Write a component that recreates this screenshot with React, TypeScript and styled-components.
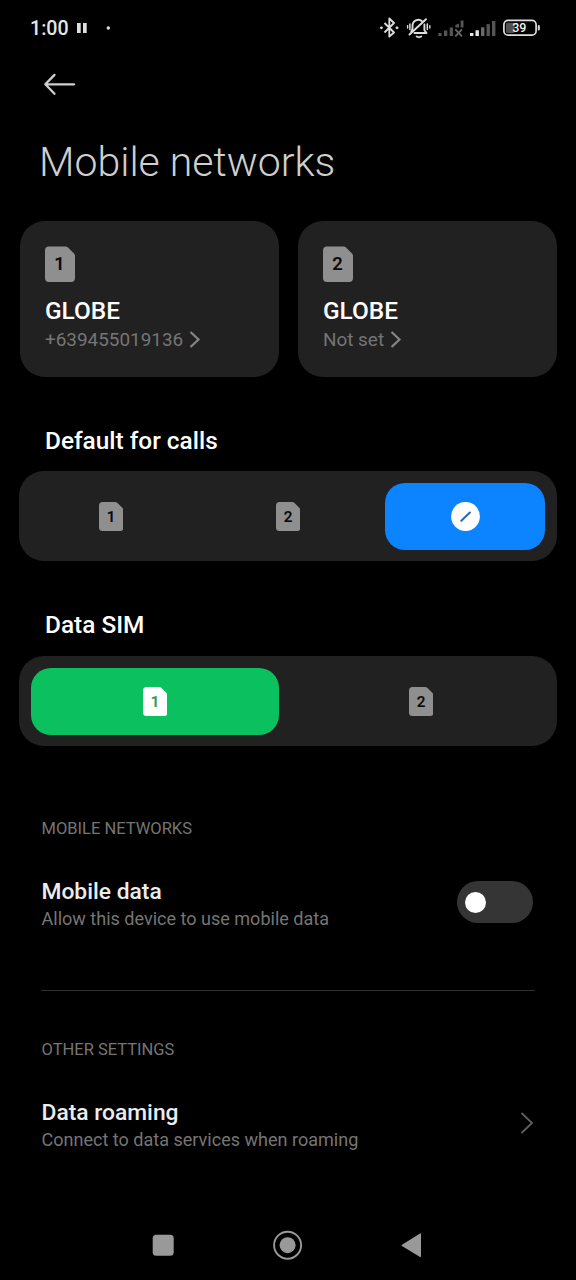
import React from 'react';
import styled, { createGlobalStyle } from 'styled-components';

const GlobalStyle = createGlobalStyle`
  *, *::before, *::after { box-sizing: border-box; }
  html, body { margin: 0; padding: 0; background: #000; }
  body { font-family: Roboto, "Noto Sans", sans-serif; color: #fff; }
  button { font: inherit; color: inherit; border: 0; padding: 0; background: none; }
  svg { display: block; flex: none; }
`;

const Screen = styled.div`
  display: flex;
  flex-direction: column;
  width: 576px;
  height: 1280px;
  overflow: hidden;
  background: #000;
`;

const StatusBar = styled.header`
  display: flex;
  align-items: center;
  justify-content: space-between;
  height: 56px;
  padding: 0 35px 0 30px;
`;

const StatusLeft = styled.div`
  display: flex;
  align-items: center;
`;

const Clock = styled.span`
  width: 47px;
  padding-top: 2px;
  font-size: 19.6px;
  font-weight: 500;
  line-height: 24px;
  color: #e6e6e6;
`;

const AppBar = styled.div`
  display: flex;
  align-items: center;
  height: 56px;
  padding-left: 43px;
`;

const Title = styled.h1`
  margin: 25px 0 34px 39px;
  font-size: 41px;
  font-weight: 300;
  line-height: 50px;
  color: #cfcfcf;
  white-space: nowrap;
`;

const Cards = styled.div`
  display: grid;
  grid-template-columns: 1fr 1fr;
  gap: 19px;
  padding: 0 19.5px;
`;

const Card = styled.button`
  display: flex;
  flex-direction: column;
  align-items: flex-start;
  height: 156px;
  padding: 25px 25.5px 0;
  border-radius: 25px;
  background: #212121;
`;

const Carrier = styled.span`
  margin-top: 15px;
  font-size: 24.4px;
  font-weight: 500;
  line-height: 28px;
`;

const CardDetail = styled.span`
  display: flex;
  align-items: center;
  gap: 6.2px;
  margin-top: 1px;
  font-size: 18.9px;
  line-height: 28px;
  color: #757575;
`;

const Heading = styled.h2<{ $top: number }>`
  margin: ${(p) => p.$top}px 0 0 45px;
  font-size: 24.4px;
  font-weight: 500;
  line-height: 30px;
`;

const Segments = styled.div<{ $gap: number; $top: number }>`
  display: flex;
  gap: ${(p) => p.$gap}px;
  height: 90px;
  margin: ${(p) => p.$top}px 19px 0;
  padding: 12px 12px 11px;
  border-radius: 25px;
  background: #212121;
`;

const Segment = styled.button<{ $fill?: string }>`
  display: flex;
  flex: 1;
  align-items: center;
  justify-content: center;
  border-radius: 20px;
  background: ${(p) => p.$fill ?? 'transparent'};
`;

const Caption = styled.h3<{ $top: number }>`
  margin: ${(p) => p.$top}px 0 0 41.5px;
  font-size: 16.5px;
  font-weight: 400;
  line-height: 20px;
  color: #757575;
`;

const Row = styled.div`
  display: flex;
  align-items: center;
  justify-content: space-between;
  height: 48px;
  margin-top: 39px;
  padding: 0 42px 0 41.5px;
`;

const RowText = styled.div`
  display: flex;
  flex-direction: column;
  align-self: flex-start;
`;

const RowTitle = styled.span`
  font-size: 22.8px;
  font-weight: 500;
  line-height: 27px;
  color: #ececec;
`;

const RowDetail = styled.span`
  font-size: 18.05px;
  line-height: 27px;
  color: #757575;
`;

const Toggle = styled.button`
  display: flex;
  align-items: center;
  width: 76px;
  height: 42px;
  margin-right: 1px;
  padding-left: 8px;
  border-radius: 21px;
  background: #353535;
`;

const Knob = styled.span`
  width: 21px;
  height: 21px;
  border-radius: 50%;
  background: #fff;
`;

const Divider = styled.hr`
  width: 494px;
  height: 1px;
  margin: 64px 0 0 41px;
  border: 0;
  background: #303030;
`;

const NavBar = styled.nav`
  display: flex;
  align-items: center;
  justify-content: space-between;
  height: 70px;
  margin-top: auto;
  padding: 0 154px 0 152px;
`;

interface SimProps {
  slot: number;
  large?: boolean;
  fill?: string;
  ink?: string;
}

function SimIcon({ slot, large, fill = '#8f8f8f', ink = '#080808' }: SimProps) {
  const w = large ? 30 : 24.5;
  const h = large ? 36 : 29;
  return (
    <svg width={w} height={h} viewBox={`0 0 ${w} ${h}`}>
      <path
        fill={fill}
        d={
          large
            ? 'M4 0.5H20.6Q22 0.5 23 1.5L29 7.5Q30 8.5 30 10V32Q30 36 26 36H4Q0 36 0 32V4.5Q0 0.5 4 0.5Z'
            : 'M3.5 0H16Q17.5 0 18.5 1L23.5 6Q24.5 7 24.5 8.5V25.5Q24.5 29 21 29H3.5Q0 29 0 25.5V3.5Q0 0 3.5 0Z'
        }
      />
      <text
        x={large ? 14.5 : 12}
        y={large ? 24.4 : 19.6}
        textAnchor="middle"
        fontFamily="Roboto, sans-serif"
        fontWeight="500"
        fontSize={large ? 18.4 : 15.2}
        fill={ink}
        stroke={ink}
        strokeWidth="0.2"
      >
        {slot}
      </text>
    </svg>
  );
}

const Chevron = () => (
  <svg width="12" height="18" viewBox="0 0 12 18" fill="none" stroke="#858585" strokeWidth="2.2">
    <path d="M1.5 1L9.5 8.5L1.5 16" />
  </svg>
);

const StatusIcons = () => (
  <svg width="161" height="24" viewBox="0 0 161 24" fill="none" stroke="#dedede">
    <g strokeWidth="1.8" strokeLinejoin="round">
      <path d="M4.5 7L14 16.5L9.3 20.7V2.5L14 7L4.5 16.5" />
      <circle cx="1.4" cy="11.8" r="1.4" fill="#dedede" stroke="none" />
      <circle cx="17" cy="11.8" r="1.4" fill="#dedede" stroke="none" />
    </g>
    <g strokeWidth="1.9" strokeLinecap="round" strokeLinejoin="round">
      <path d="M42.2 5.4C38.4 1.8 32.5 4.6 32.5 9.8V13L31.3 15.5M34.5 17H46.5L44.4 14.2V8.5" />
      <path d="M29.5 18.5L46 3.2" />
      <path d="M36.7 20.5Q39 21.8 41.2 20.5" strokeWidth="2" />
      <path d="M29.9 8V13.5M47.3 8V13.5" strokeWidth="1.5" />
      <path d="M27.6 9.6V12M49.8 9.6V12" strokeWidth="1.4" />
    </g>
    <g fill="#555" stroke="none">
      <rect x="58.3" y="17" width="3.3" height="3" />
      <rect x="64" y="14.5" width="3.3" height="5.5" />
      <rect x="69.7" y="11.5" width="3.3" height="8.5" />
      <path d="M75.4 9L79 7.5V11.5H75.4Z" />
      <rect x="80.6" y="4.5" width="2.9" height="7" />
    </g>
    <path d="M75.3 13.3L82 20.3M82 13.3L75.3 20.3" stroke="#666" strokeWidth="1.9" />
    <g fill="#e8e8e8" stroke="none">
      <rect x="90" y="17" width="3.4" height="3" />
      <rect x="95.5" y="14.3" width="3.4" height="5.7" />
    </g>
    <g fill="#555" stroke="none">
      <rect x="101" y="11.3" width="3.4" height="8.7" fill="#6a6a6a" />
      <rect x="106.5" y="8.1" width="3.4" height="11.9" />
      <rect x="112" y="5" width="3.4" height="15" />
    </g>
    <rect x="126" y="6.8" width="8.6" height="10.2" rx="1.5" fill="#505050" stroke="none" />
    <rect x="123.9" y="4.4" width="32.2" height="14.8" rx="4.2" strokeWidth="1.7" />
    <path d="M158.8 10V13.6" strokeWidth="2" strokeLinecap="round" />
    <text x="139.3" y="16.3" textAnchor="middle" fontFamily="Roboto, sans-serif" fontSize="12.5" fontWeight="500" fill="#f0f0f0" stroke="none">39</text>
  </svg>
);

export default function App() {
  return (
    <Screen>
      <GlobalStyle />
      <StatusBar>
        <StatusLeft>
          <Clock>1:00</Clock>
          <svg width="36" height="12" viewBox="0 0 36 12" fill="#dedede">
            <rect x="0" y="1" width="3.7" height="10" />
            <rect x="6" y="1" width="3.7" height="10" />
            <circle cx="31.3" cy="6" r="1.7" />
          </svg>
        </StatusLeft>
        <StatusIcons />
      </StatusBar>

      <AppBar>
        <svg width="34" height="24" viewBox="0 0 34 24" fill="none" stroke="#cfcfcf" strokeWidth="2.3" strokeLinecap="round" strokeLinejoin="round">
          <path d="M31 12.3H2.3M11.5 2.9L2.3 12.3L11.5 21.7" />
        </svg>
      </AppBar>

      <Title>Mobile networks</Title>

      <Cards>
        <Card>
          <SimIcon slot={1} large />
          <Carrier>GLOBE</Carrier>
          <CardDetail>
            +639455019136
            <Chevron />
          </CardDetail>
        </Card>
        <Card>
          <SimIcon slot={2} large />
          <Carrier>GLOBE</Carrier>
          <CardDetail>
            Not set
            <Chevron />
          </CardDetail>
        </Card>
      </Cards>

      <Heading $top={49}>Default for calls</Heading>
      <Segments $gap={17} $top={15}>
        <Segment>
          <SimIcon slot={1} />
        </Segment>
        <Segment>
          <SimIcon slot={2} />
        </Segment>
        <Segment $fill="#0d84ff">
          <svg width="29" height="29" viewBox="0 0 29 29">
            <circle cx="14.5" cy="14.5" r="14.4" fill="#fff" />
            <path d="M10.3 18.8L18.9 10.5" stroke="#2b6cb0" strokeWidth="2.1" strokeLinecap="round" />
          </svg>
        </Segment>
      </Segments>

      <Heading $top={49}>Data SIM</Heading>
      <Segments $gap={18} $top={15.5}>
        <Segment $fill="#0bc15f">
          <SimIcon slot={1} fill="#fff" ink="#2f9460" />
        </Segment>
        <Segment>
          <SimIcon slot={2} />
        </Segment>
      </Segments>

      <Caption $top={73.5}>MOBILE NETWORKS</Caption>
      <Row>
        <RowText>
          <RowTitle>Mobile data</RowTitle>
          <RowDetail>Allow this device to use mobile data</RowDetail>
        </RowText>
        <Toggle role="switch" aria-checked={false} aria-label="Mobile data">
          <Knob />
        </Toggle>
      </Row>

      <Divider />

      <Caption $top={49}>OTHER SETTINGS</Caption>
      <Row>
        <RowText>
          <RowTitle>Data roaming</RowTitle>
          <RowDetail>Connect to data services when roaming</RowDetail>
        </RowText>
        <svg width="14" height="22" viewBox="0 0 14 22" fill="none" stroke="#606060" strokeWidth="1.8">
          <path d="M1.5 1L12 11L1.5 21" />
        </svg>
      </Row>

      <NavBar>
        <svg width="22" height="22" viewBox="0 0 22 22">
          <rect x="0.7" y="0.7" width="21" height="21" rx="3.5" fill="#999" />
        </svg>
        <svg width="30" height="30" viewBox="0 0 30 30">
          <circle cx="14.6" cy="15.2" r="13.5" fill="none" stroke="#999" strokeWidth="1.9" />
          <circle cx="14.6" cy="15.2" r="8" fill="#999" />
        </svg>
        <svg width="21" height="26" viewBox="0 0 21 26">
          <path d="M1 12.7Q0 13.2 1 13.9L19 25Q20 25.4 20 24.3V2Q20 1 19 1.5Z" fill="#999" />
        </svg>
      </NavBar>
    </Screen>
  );
}
